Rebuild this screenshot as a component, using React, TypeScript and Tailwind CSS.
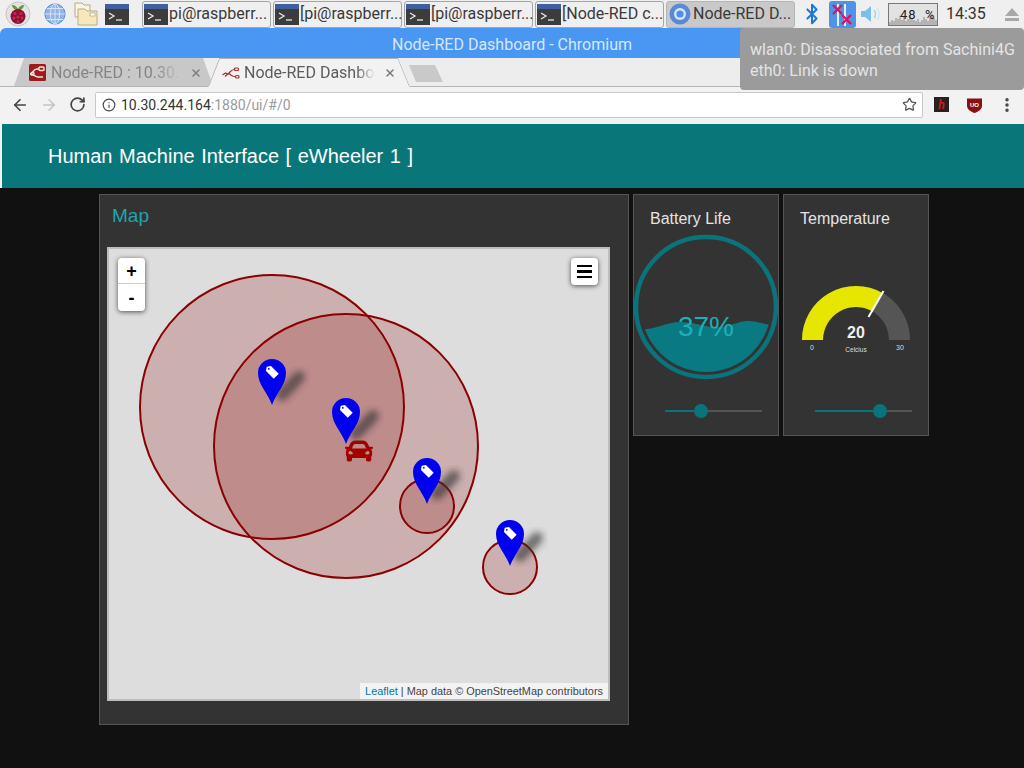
import { ArrowLeft, ArrowRight, Bluetooth, Info, MoreVertical, RotateCw, Star, X } from "lucide-react";
import { FaCar } from "react-icons/fa";

const TASKS = ["pi@raspberr...", "[pi@raspberr...", "[pi@raspberr...", "[Node-RED c..."];

const CIRCLES = [
  { cx: 272, cy: 407, r: 132 },
  { cx: 346, cy: 446, r: 132 },
  { cx: 427, cy: 506, r: 27 },
  { cx: 510, cy: 567, r: 27 },
];

const MARKERS = [
  { x: 272, y: 405 },
  { x: 346, y: 444 },
  { x: 427, y: 504 },
  { x: 510, y: 566 },
];

// rough cpu history behind the load figure
const CPU_BARS = [3, 5, 4, 7, 6, 9, 5, 8, 4, 6, 10, 7, 5, 4, 6, 3, 5, 8, 6, 4, 9, 11, 7, 5];

function TerminalIcon() {
  return (
    <svg width="24" height="21" viewBox="0 0 24 21" className="shrink-0">
      <rect width="24" height="21" fill="#3c3c3c" />
      <rect width="24" height="5" fill="#3f5f9e" />
      <path d="M4 9l5 3-5 3" fill="none" stroke="#e8e8e8" strokeWidth="1.3" />
      <path d="M11 16h6" stroke="#e8e8e8" strokeWidth="1.3" />
    </svg>
  );
}

function NodeRedFavicon() {
  return (
    <svg width="17" height="17" viewBox="0 0 17 17" className="shrink-0">
      <rect width="17" height="17" rx="1.500" fill="#9c1c1c" />
      <g fill="none" stroke="#f4e2e2" strokeWidth="1.400">
        <path d="M1 10c3 0 3-5 7-5h2" />
        <path d="M1 10c4 0 5 3 8 3h5" />
        <rect x="10" y="3" width="5" height="3.500" rx="1" />
        <rect x="2" y="8.500" width="3" height="2.500" rx="1" />
      </g>
    </svg>
  );
}

function NodeRedFaviconLight() {
  return (
    <svg width="18" height="14" viewBox="0 0 18 14" className="shrink-0">
      <g fill="none" stroke="#a83030" strokeWidth="1.200">
        <path d="M0.500 9l3-2 3 1.500" />
        <path d="M3 10.500l4-3.500c2-2 3-3.500 5-3.500h1" />
        <path d="M7 7.500c2 2 3 3 5 3h2" />
        <rect x="12.500" y="2" width="4" height="2.500" rx="1" />
        <rect x="13.500" y="9.500" width="3.500" height="2.500" rx="1" />
      </g>
    </svg>
  );
}

function PanelBar() {
  return (
    <div className="flex h-[28px] items-center bg-[#efefef] pl-[5px]">
      <svg width="26" height="26" viewBox="0 0 26 26" className="shrink-0">
        <circle cx="13" cy="13" r="12" fill="#e6e2e2" stroke="#c8c4c4" />
        <path d="M7 4c3 0 5 2 6 4 1-2 3-4 6-4 0 3-3 5-6 5s-6-2-6-5z" fill="#5d9e3a" />
        <circle cx="13" cy="15.500" r="7.500" fill="#8f1034" />
        <circle cx="10" cy="12.500" r="1.500" fill="#c22a52" />
        <circle cx="16" cy="12.500" r="1.500" fill="#c22a52" />
        <circle cx="13" cy="16" r="1.500" fill="#c22a52" />
        <circle cx="9" cy="17" r="1.500" fill="#c22a52" />
        <circle cx="17" cy="17" r="1.500" fill="#c22a52" />
        <circle cx="13" cy="20.500" r="1.300" fill="#c22a52" />
      </svg>
      <svg width="22" height="22" viewBox="0 0 24 24" className="ml-[13px] shrink-0">
        <circle cx="12" cy="12" r="11" fill="#8fb4e6" stroke="#5b86c4" />
        <g fill="none" stroke="#dce8f8" strokeWidth="1">
          <ellipse cx="12" cy="12" rx="5" ry="11" />
          <path d="M12 1v22M1 12h22M3 6h18M3 18h18" />
        </g>
      </svg>
      <svg width="24" height="24" viewBox="0 0 24 24" className="ml-[8px] shrink-0">
        <path d="M1 1h7l2 2h6v12H1z" fill="#f9f5e6" stroke="#b8ab84" />
        <path d="M4 7h7l2 2h10v14H4z" fill="#f6e8bb" stroke="#b8ab84" />
        <rect x="16" y="11" width="5" height="3" fill="#fff" stroke="#9a8f70" strokeWidth=".6" />
      </svg>
      <div className="ml-[7px]">
        <TerminalIcon />
      </div>
      <div className="ml-[13px] flex gap-[2px]">
        {TASKS.map((t, i) => (
          <div
            key={i}
            className="flex h-[27px] w-[129px] items-center gap-[1px] rounded-[3px] border border-[#a5a5a5] bg-[#efefef] pl-[1px] text-[16px] leading-none text-[#3a3a3a]"
          >
            <TerminalIcon />
            <span className="whitespace-nowrap">{t}</span>
          </div>
        ))}
        <div className="flex h-[27px] w-[129px] items-center gap-[2px] rounded-[3px] border border-[#b5b5b5] bg-[#c9c9c9] pl-[2px] text-[16px] leading-none text-[#3a3a3a]">
          <svg width="22" height="22" viewBox="0 0 22 22" className="shrink-0">
            <circle cx="11" cy="11" r="10.500" fill="#5a8ad6" />
            <circle cx="11" cy="11" r="6" fill="#d9e4f6" />
            <circle cx="11" cy="11" r="3.600" fill="#4f8fe8" />
          </svg>
          <span className="whitespace-nowrap">Node-RED D...</span>
        </div>
      </div>
      <Bluetooth className="ml-[6px] shrink-0 text-[#1b78d6]" size={22} strokeWidth={2.2} />
      <div className="ml-[6px] flex h-[27px] w-[27px] shrink-0 items-center justify-center rounded-[3px] bg-[#4d94e8]">
        <svg width="27" height="27" viewBox="0 0 27 27">
          <path d="M9 3v22M16 3v22" stroke="#e8f0fa" strokeWidth="2" />
          <path d="M4 4l9 9M13 4l-9 9M13 14l9 9M22 14l-9 9" stroke="#e0115f" strokeWidth="2.400" />
        </svg>
      </div>
      <svg width="20" height="18" viewBox="0 0 20 18" className="ml-[5px] shrink-0">
        <path d="M0 6h4l6-5v16l-6-5H0z" fill="#7cc0ea" />
        <path d="M13 5c2 2 2 6 0 8" fill="none" stroke="#a5d4f0" strokeWidth="1.500" />
        <path d="M16 3c3 3 3 9 0 12" fill="none" stroke="#cfe6f6" strokeWidth="1.500" />
      </svg>
      <div className="relative ml-[7px] flex h-[23px] w-[50px] shrink-0 items-center justify-center overflow-hidden border border-[#777] bg-[#e2e2e2]">
        <div className="flex h-full w-full items-end justify-between">
          {CPU_BARS.map((h, i) => (
            <div key={i} className="w-[1.500px] bg-[#b4b4b4]" style={{ height: h }} />
          ))}
        </div>
        <span className="absolute left-[11px] whitespace-pre text-[13px] leading-none tracking-[1px] text-[#222]">48  %</span>
      </div>
      <span className="ml-[8px] text-[16px] leading-none text-[#333]">14:35</span>
      <svg width="14" height="13" viewBox="0 0 14 13" className="ml-[19px] shrink-0">
        <path d="M7 0l7 8H0z" fill="#a8a8a8" />
        <rect y="10" width="14" height="3" fill="#a8a8a8" />
      </svg>
    </div>
  );
}

function TabStrip() {
  return (
    <div className="flex h-[29px] items-start border-b border-[#b5b5b5] bg-[#ededed] pl-[14px]">
      <div className="flex h-[28px] w-[199px] items-center bg-[#c8c8c8] pl-[15px] pt-[1px] text-[16px] text-[#858585] [clip-path:polygon(10px_0,189px_0,199px_100%,0_100%)]">
        <NodeRedFavicon />
        <span className="ml-[5px] w-[132px] overflow-hidden whitespace-nowrap [mask-image:linear-gradient(90deg,#000_78%,transparent_98%)]">
          Node-RED : 10.30.
        </span>
        <X size={12} strokeWidth={3} className="ml-[7px] text-[#7d7d7d]" />
      </div>
      <div className="relative -ml-[5px] flex h-[29px] w-[202px] items-center bg-[#f2f2f2] pl-[14px] text-[16px] text-[#5c5c5c] [clip-path:polygon(11px_0,190px_0,202px_100%,0_100%)]">
        <NodeRedFaviconLight />
        <span className="ml-[4px] w-[131px] overflow-hidden whitespace-nowrap [mask-image:linear-gradient(90deg,#000_86%,transparent_100%)]">
          Node-RED Dashbo
        </span>
        <X size={12} strokeWidth={3} className="ml-[9px] text-[#777]" />
        <svg width="202" height="29" className="absolute left-0 top-0">
          <path d="M0.500 28.500L11.500 0.500H190L201.500 28.500" fill="none" stroke="#b0b0b0" />
        </svg>
      </div>
      <div className="ml-[-1px] mt-[7px] h-[17px] w-[34px] bg-[#c9c9c9] [clip-path:polygon(0_0,26px_0,34px_100%,7px_100%)]" />
    </div>
  );
}

function Toolbar() {
  return (
    <div className="flex h-[35px] items-center bg-[#f2f2f2] pl-[11px]">
      <ArrowLeft size={18} strokeWidth={2.2} className="text-[#444]" />
      <ArrowRight size={18} strokeWidth={2} className="ml-[11px] text-[#c4c4c4]" />
      <RotateCw size={17} strokeWidth={2.4} className="ml-[11px] text-[#444]" />
      <div className="ml-[9px] flex h-[26px] w-[828px] items-center rounded-[2px] border border-[#c8c8c8] bg-white pl-[6px] text-[14px] text-[#333]">
        <Info size={14} strokeWidth={2} className="text-[#444]" />
        <span className="ml-[5px] pt-[1px]">
          10.30.244.164<span className="text-[#9a9a9a]">:1880/ui/#/0</span>
        </span>
        <Star size={15} strokeWidth={2} className="ml-auto mr-[5px] text-[#555]" />
      </div>
      <div className="ml-[11px] flex h-[15px] w-[15px] items-center justify-center bg-[#2a2020] text-[12px] font-bold italic leading-none text-[#c81e1e]">
        h
      </div>
      <svg width="15" height="16" viewBox="0 0 15 16" className="ml-[18px]">
        <path d="M0 1.500h15v7c0 4-3.500 6-7.500 7.500C3.500 14.500 0 12.500 0 8.500z" fill="#8c0f0f" />
        <text x="7.500" y="9.500" textAnchor="middle" fontSize="6" fontWeight="700" fill="#fff" fontFamily="Liberation Sans, sans-serif">
          UO
        </text>
      </svg>
      <MoreVertical size={18} strokeWidth={2.6} className="ml-[16px] text-[#444]" />
    </div>
  );
}

function MapCanvas() {
  return (
    <svg viewBox="109 249 499 450" className="h-full w-full">
      <defs>
        <filter id="shadowBlur" x="-60%" y="-60%" width="220%" height="220%">
          <feGaussianBlur stdDeviation="3.500" />
        </filter>
      </defs>
      {CIRCLES.map((c, i) => (
        <circle key={i} {...c} fill="#8b0000" fillOpacity="0.2" stroke="#8b0000" strokeWidth="2" />
      ))}
      <FaCar x={345} y={437} size={28} color="#a40000" />
      {MARKERS.map((m, i) => (
        <g key={i} transform={`translate(${m.x} ${m.y})`}>
          <path d="M10 -10L27 -28" stroke="#333" strokeOpacity="0.65" strokeWidth="12" strokeLinecap="round" filter="url(#shadowBlur)" />
          <path d="M0 0C-4 -12 -14 -20 -14 -32A14 14 0 1 1 14 -32C14 -20 4 -12 0 0Z" fill="#0000ee" />
          <g transform="translate(0 -33) rotate(-45)">
            <path d="M-3.500 -5L0 -7.500L3.500 -5V6H-3.500Z" fill="#fff" />
            <circle cy="-4.500" r="0.900" fill="#0000ee" />
          </g>
        </g>
      ))}
    </svg>
  );
}

function BatteryGauge() {
  return (
    <svg width="144" height="146" viewBox="634 234 144 146" className="block">
      <defs>
        <clipPath id="batteryClip">
          <circle cx="706" cy="307" r="65" />
        </clipPath>
      </defs>
      <circle cx="706" cy="307" r="70" fill="none" stroke="#0a747c" strokeWidth="4.500" />
      <path
        clipPath="url(#batteryClip)"
        d="M636 329C655 331 665 322 680 322C695 322 705 328 720 327C732 326 738 321 748 321C757 321 765 325 776 325V380H636Z"
        fill="#0a7a82"
      />
      <text x="706" y="336" textAnchor="middle" fontSize="28" fill="#1bb0b8" fontFamily="Liberation Sans, sans-serif">
        37%
      </text>
    </svg>
  );
}

function TempGauge() {
  return (
    <svg width="144" height="86" viewBox="784 278 144 86" className="block">
      <path d="M802 340A54 54 0 0 1 910 340H889A33 33 0 0 0 823 340Z" fill="#555" />
      <path d="M802 340A54 54 0 0 1 883 293.200L872.500 311.400A33 33 0 0 0 823 340Z" fill="#e6e600" />
      <path d="M883.500 291L868.500 317" stroke="#fff" strokeWidth="2" />
      <g fontFamily="Liberation Sans, sans-serif" textAnchor="middle">
        <text x="856" y="338" fontSize="16" fontWeight="700" fill="#eee">
          20
        </text>
        <text x="812" y="350" fontSize="7" fill="#ddd">
          0
        </text>
        <text x="900" y="350" fontSize="7" fill="#ddd">
          30
        </text>
        <text x="856" y="352" fontSize="6.500" fill="#ddd">
          Celcius
        </text>
      </g>
    </svg>
  );
}

function Slider({ value, rest }: { value: number; rest: number }) {
  return (
    <div className="flex items-center">
      <div className="h-[2px] bg-[#0a747c]" style={{ width: value }} />
      <div className="h-[14px] w-[14px] rounded-full bg-[#0a747c]" />
      <div className="h-[2px] bg-[#555]" style={{ width: rest }} />
    </div>
  );
}

export default function App() {
  return (
    <div className="relative flex h-[768px] w-[1024px] flex-col overflow-hidden bg-[#efefef] font-['Roboto',sans-serif]">
      <PanelBar />
      <div className="flex h-[30px] items-center justify-center rounded-t-[6px] bg-[#4a96f3] pt-[4px] text-[16px] text-[#d5e7fb]">
        Node-RED Dashboard - Chromium
      </div>
      <TabStrip />
      <Toolbar />
      <div className="flex-1 bg-[#111] font-['Liberation_Sans',sans-serif]">
        <div className="border-l-2 border-t-2 border-[#f2f2f2]">
          <div className="flex h-[64px] items-center bg-[#097779] pl-[46px] text-[20px] text-white [word-spacing:1px]">
            Human Machine Interface [ eWheeler 1 ]
          </div>
        </div>
        <div className="flex items-start gap-[4px] pl-[99px] pt-[6px]">
          <div className="flex h-[531px] w-[530px] flex-col border border-[#555] bg-[#333] px-[7px] pt-[10px]">
            <div className="pl-[5px] text-[19px] leading-[22px] text-[#1fa5b0]">Map</div>
            <div className="relative mt-[20px] h-[454px] w-[503px] border-2 border-[#bdbdbd] bg-[#ddd]">
              <MapCanvas />
              <div className="absolute left-[9px] top-[9px] flex w-[27px] flex-col rounded-[4px] bg-white text-[18px] font-bold leading-none text-black shadow-[0_1px_5px_rgba(0,0,0,0.65)]">
                <div className="flex h-[26px] items-center justify-center border-b border-[#ccc]">+</div>
                <div className="flex h-[27px] items-center justify-center">-</div>
              </div>
              <div className="absolute right-[10px] top-[9px] flex h-[27px] w-[27px] flex-col items-center justify-center gap-[3px] rounded-[4px] bg-white shadow-[0_1px_5px_rgba(0,0,0,0.65)]">
                <div className="h-[2.500px] w-[15px] bg-black" />
                <div className="h-[2.500px] w-[15px] bg-black" />
                <div className="h-[2.500px] w-[15px] bg-black" />
              </div>
              <div className="absolute bottom-0 right-0 h-[16px] whitespace-nowrap bg-[#f3f3f3] pl-[5px] pr-[5px] text-[10.900px] leading-[16px] text-[#444]">
                <span className="text-[#0078a8]">Leaflet</span> | Map data © OpenStreetMap contributors
              </div>
            </div>
          </div>
          <div className="flex h-[242px] w-[146px] flex-col border border-[#555] bg-[#333]">
            <div className="pl-[16px] pt-[14px] text-[16px] leading-[20px] text-[#e4e4e4]">Battery Life</div>
            <div className="mt-[5px]">
              <BatteryGauge />
            </div>
            <div className="ml-[31px] mt-[24px]">
              <Slider value={29} rest={54} />
            </div>
          </div>
          <div className="flex h-[242px] w-[146px] flex-col border border-[#555] bg-[#333]">
            <div className="pl-[16px] pt-[14px] text-[16px] leading-[20px] text-[#e4e4e4]">Temperature</div>
            <div className="mt-[49px]">
              <TempGauge />
            </div>
            <div className="ml-[31px] mt-[40px]">
              <Slider value={58} rest={25} />
            </div>
          </div>
        </div>
      </div>
      <div className="absolute left-[740px] top-[28px] h-[62px] w-[284px] rounded-[4px] bg-[#9b9b9b] pl-[10px] pt-[11px] text-[16px] leading-[21px] text-[#e4e4e4]">
        wlan0: Disassociated from Sachini4G
        <br />
        eth0: Link is down
      </div>
    </div>
  );
}
